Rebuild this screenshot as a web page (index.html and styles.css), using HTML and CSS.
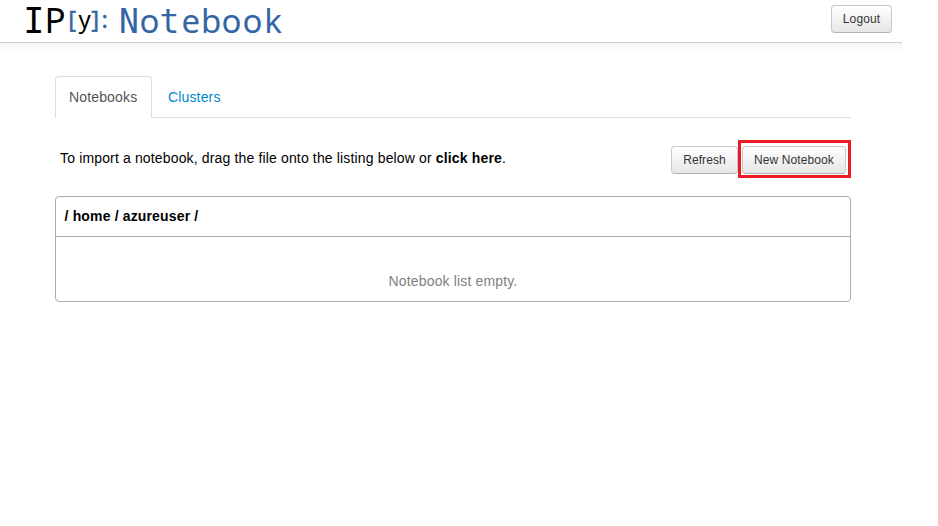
FILE: index.html
```html
<!DOCTYPE html>
<html lang="en">
<head>
<meta charset="utf-8">
<title>IPython Notebook</title>
<link rel="stylesheet" href="styles.css">
</head>
<body>
<header class="header">
  <svg class="logo" width="270" height="42" viewBox="0 0 270 42" role="img" aria-label="IP[y]: Notebook">
    <text class="logo-ip" x="9.8 31.2" y="32.7"><tspan class="mono">I</tspan>P</text>
    <text class="logo-bracket" x="48.3" y="28.3">[</text>
    <text class="logo-y" x="60.5" y="28">y</text>
    <text class="logo-bracket" x="71.2" y="28.3">]</text>
    <text class="logo-bracket" x="80.7" y="28">:</text>
    <text class="logo-name" x="105 125.5 145.5 166.7 187.1 207.5 228.5 249" y="32.6"><tspan class="mono">N</tspan>o<tspan class="mono">t</tspan>ebook</text>
  </svg>
  <button class="btn">Logout</button>
</header>
<main class="content">
  <nav class="tabs">
    <a class="tab active">Notebooks</a>
    <a class="tab">Clusters</a>
  </nav>
  <div class="toolbar">
    <span class="hint">To import a notebook, drag the file onto the listing below or <b>click here</b>.</span>
    <button class="btn">Refresh</button>
    <div class="highlight"><button class="btn">New Notebook</button></div>
  </div>
  <section class="list">
    <div class="path">/ home / azureuser /</div>
    <div class="empty">Notebook list empty.</div>
  </section>
</main>
</body>
</html>
```
FILE: styles.css
```css
* { box-sizing: border-box; }
body {
  margin: 0;
  background: #fff;
  color: #000;
  font: 14px/20px "Liberation Sans", Arial, sans-serif;
  letter-spacing: 0.15px;
}
.header {
  display: flex;
  justify-content: space-between;
  align-items: flex-start;
  width: 902px;
  height: 43px;
  padding: 0 10px 0 24px;
  border-bottom: 1px solid #cdcdcd;
  position: relative;
}
.header::after {
  content: "";
  position: absolute;
  left: 0;
  right: 0;
  top: 43px;
  height: 9px;
  background: linear-gradient(#f4f4f4, #fff);
}
.logo { display: block; overflow: visible; letter-spacing: 0; }
.logo text { font-family: "Noto Sans", sans-serif; text-anchor: middle; }
.logo .mono { font-family: "DejaVu Sans Mono", monospace; }
.logo .logo-ip { font-size: 35px; fill: #000; }
.logo .logo-name { font-size: 33px; fill: #3465a4; }
.logo .logo-bracket { font-size: 24px; fill: #3465a4; stroke: #3465a4; stroke-width: 0.4px; }
.logo .logo-y { font-size: 24px; fill: #000; }
.btn {
  height: 28px;
  padding: 0;
  border: 1px solid #c9c9c9;
  border-bottom-color: #b3b3b3;
  border-radius: 4px;
  background: linear-gradient(#fff, #e6e6e6);
  color: #333;
  font: 12px/20px "Liberation Sans", Arial, sans-serif;
  letter-spacing: 0.1px;
}
.header .btn { margin-top: 5px; width: 61px; }
.content { width: 796px; margin: 33px 0 0 55px; }
.tabs { display: flex; height: 42px; border-bottom: 1px solid #ddd; }
.tab { height: 42px; padding: 11px 15px 0 16px; color: #0088cc; }
.tab.active {
  width: 97px;
  padding: 10px 0 0 13px;
  border: 1px solid #ddd;
  border-bottom-color: #fff;
  border-radius: 4px 4px 0 0;
  background: #fff;
  color: #555;
}
.toolbar { display: flex; align-items: center; height: 38px; margin-top: 22px; }
.toolbar .btn { width: 67px; margin-top: 2px; }
.hint { flex: 1; padding-left: 5px; margin-top: -2px; }
.highlight { width: 113px; height: 38px; border: 3px solid #ed1c24; padding: 1px 0 0 1px; }
.toolbar .highlight .btn { display: block; width: 104px; }
.list { margin-top: 18px; height: 106px; border: 1px solid #ababab; border-radius: 4px; }
.path { height: 40px; padding: 9px 8.6px 0; border-bottom: 1px solid #ababab; font-weight: bold; }
.empty { padding-top: 34px; text-align: center; color: #808080; }
```
